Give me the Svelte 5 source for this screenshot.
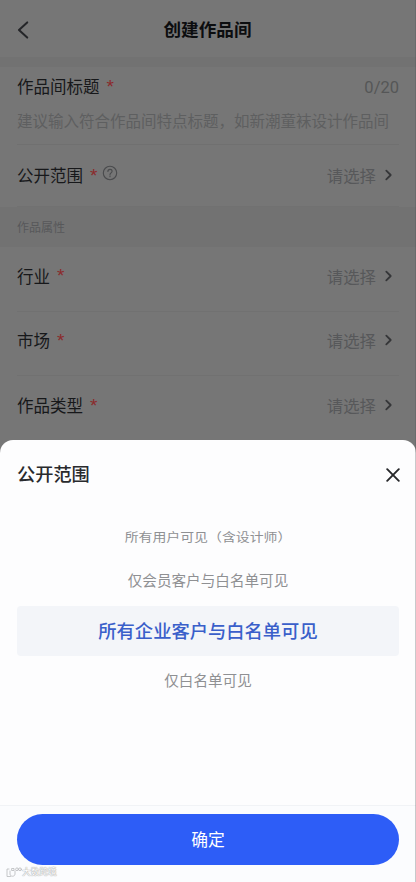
<script>
  const attributes = ['行业', '市场', '作品类型'];
  const options = [
    { text: '所有用户可见（含设计师）', kind: 'far' },
    { text: '仅会员客户与白名单可见', kind: 'near' },
    { text: '所有企业客户与白名单可见', kind: 'selected' },
    { text: '仅白名单可见', kind: 'last' }
  ];
</script>

{#snippet choose()}
  <span class="choose">
    请选择
    <svg width="8" height="12" viewBox="0 0 8 12"><path d="M1.3 1.6 5.7 6 1.3 10.4" /></svg>
  </span>
{/snippet}

<div class="screen">
  <main class="page">
    <header>
      <svg class="back" width="12" height="18" viewBox="0 0 12 18"><path d="M10.2 1.4 2 9l8.2 7.6" /></svg>
      <h1>创建作品间</h1>
    </header>
    <div class="gap"></div>
    <section class="title-field">
      <div class="line">
        <span class="label">作品间标题<i>*</i></span>
        <span class="count">0/20</span>
      </div>
      <div class="placeholder">建议输入符合作品间特点标题，如新潮童袜设计作品间</div>
    </section>
    <div class="row scope">
      <span class="label">公开范围<i>*</i>
        <svg class="help" width="16" height="16" viewBox="0 0 16 16">
          <circle cx="8" cy="8" r="6.7" />
          <path d="M5.9 6.5c0-1.3.9-2.1 2.1-2.1s2.1.8 2.1 1.9c0 1.5-2.1 1.6-2.1 3.2M8 10.9v.8" />
        </svg>
      </span>
      {@render choose()}
    </div>
    <div class="group">作品属性</div>
    {#each attributes as name}
      <div class="row">
        <span class="label">{name}<i>*</i></span>
        {@render choose()}
      </div>
    {/each}
  </main>

  <section class="sheet">
    <div class="sheet-head">
      <h2>公开范围</h2>
      <svg width="14" height="14" viewBox="0 0 14 14"><path d="m1.2 1.2 11.6 11.6M12.8 1.2 1.2 12.8" /></svg>
    </div>
    <div class="options">
      {#each options as option}
        <div class="option {option.kind}"><span>{option.text}</span></div>
      {/each}
    </div>
    <footer>
      <button>确定</button>
      <div class="mark">
        <svg width="16" height="11" viewBox="0 0 16 11">
          <path d="M3 2H1v7.5h3.5M4 4v3c0 3 5 3 5 0V4M6 1.5h2v2H6z" />
          <circle cx="11" cy="2.3" r="1.4" />
          <circle cx="14" cy="2.3" r="1.4" />
        </svg>
        <span>大数跨境</span>
      </div>
    </footer>
  </section>
  <div class="edge"></div>
</div>

<style>
  :global(body) { background: #767676; }
  .screen {
    position: relative;
    width: 416px;
    height: 882px;
    overflow: hidden;
    display: flex;
    flex-direction: column;
    box-sizing: border-box;
    background: #767676;
    font-family: "Noto Sans CJK SC", "Noto Sans", sans-serif;
    color: #17181a;
  }
  svg { fill: none; stroke-linecap: round; stroke-linejoin: round; }
  .page { height: 440px; flex: none; }
  header {
    height: 57px;
    display: flex;
    align-items: center;
    padding: 2px 17px 0;
    box-sizing: border-box;
  }
  .back { stroke: #242528; stroke-width: 2; }
  h1 {
    flex: 1;
    margin: -2px 13px 0 0;
    text-align: center;
    font-size: 17.6px;
    line-height: 26px;
    font-weight: 700;
    color: #0c0d0f;
  }
  .gap { height: 10px; background: #727272; }
  .title-field {
    height: 78px;
    margin: 0 17px;
    padding-top: 6px;
    box-sizing: border-box;
    border-bottom: 1px solid #707070;
  }
  .line { display: flex; justify-content: space-between; height: 26px; align-items: center; }
  .label { display: flex; align-items: center; font-size: 16.5px; line-height: 26px; }
  .label i {
    margin: 0 0 4px 7px;
    font: 400 19px/20px "Liberation Sans", sans-serif;
    height: 15px;
    color: #8b2a2c;
  }
  .count { margin-top: 2px; font-size: 16.5px; color: #555657; font-family: Roboto, sans-serif; }
  .placeholder {
    margin-top: 9px;
    font-size: 15.5px;
    line-height: 24px;
    white-space: nowrap;
    color: #5e5f60;
  }
  .row {
    height: 64.5px;
    box-sizing: border-box;
    margin: 0 17px;
    padding: 0 6px 6px 0;
    display: flex;
    align-items: center;
    justify-content: space-between;
    border-bottom: 1px solid #717171;
  }
  .row:last-child { border: 0; }
  .row.scope { height: 62px; padding-bottom: 1px; }
  .help { margin: -4px 0 0 5px; stroke: #4a4b4d; stroke-width: 1.1; }
  .choose { display: flex; align-items: center; gap: 9px; font-size: 16.4px; color: #57585a; }
  .choose svg { stroke: #353638; stroke-width: 1.8; }
  .group {
    height: 40px;
    padding-left: 17px;
    line-height: 39px;
    font-size: 12px;
    color: #57585a;
    background: #727272;
  }
  .sheet {
    flex: 1;
    display: flex;
    flex-direction: column;
    border-radius: 13px 13px 0 0;
    background: #fdfdfe;
  }
  .sheet-head {
    height: 69px;
    box-sizing: border-box;
    padding: 0 16px 0 17px;
    display: flex;
    align-items: center;
    justify-content: space-between;
  }
  h2 { margin: -3px 0 0; font-size: 18.2px; line-height: 28px; font-weight: 500; color: #292a2d; }
  .sheet-head svg { stroke: #26272a; stroke-width: 1.9; }
  .options { flex: 1; padding: 7px 17px 0; }
  .option {
    display: flex;
    align-items: center;
    justify-content: center;
    white-space: nowrap;
    font-size: 14.6px;
    color: #8f9093;
  }
  .far { height: 40px; padding-top: 2px; box-sizing: border-box; font-size: 13.9px; }
  .far span { transform: scaleY(.88); }
  .near { height: 50px; padding-bottom: 3px; box-sizing: border-box; }
  .selected {
    height: 50px;
    box-sizing: border-box;
    padding-bottom: 2px;
    border-radius: 4px;
    background: #f3f5f9;
    color: #3a5fca;
    font-size: 18.3px;
    font-weight: 500;
  }
  .last { height: 47px; }
  footer {
    height: 77px;
    box-sizing: border-box;
    padding: 8px 17px 0;
    border-top: 1px solid #f1f3f6;
    background: #fbfcfe;
  }
  button {
    display: block;
    width: 100%;
    height: 51px;
    padding: 0 0 2px;
    border: 0;
    border-radius: 26px;
    background: #2d5df7;
    color: #fff;
    font: 400 16.8px "Noto Sans CJK SC", sans-serif;
  }
  .mark {
    display: flex;
    align-items: center;
    height: 12px;
    margin: 1px 0 0 -11px;
    color: #fff;
    font-size: 8.7px;
    line-height: 12px;
    text-shadow: 0 0 1px #999, 0 0 1px #999;
  }
  .mark svg { stroke: #b9babc; stroke-width: .8; }
  .edge {
    position: absolute;
    top: 0;
    right: 0;
    width: 1px;
    height: 100%;
    background: rgba(80, 82, 86, .3);
  }
</style>
